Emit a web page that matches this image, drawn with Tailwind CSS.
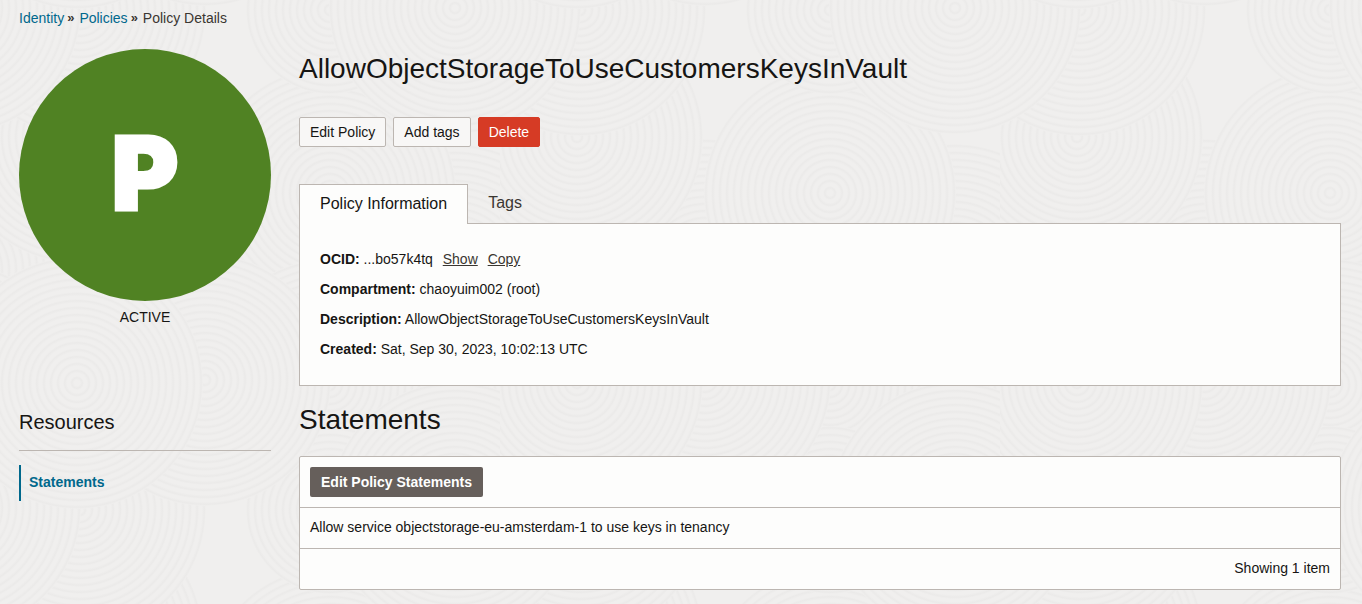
<!DOCTYPE html>
<html lang="en">
<head>
<meta charset="utf-8">
<meta name="viewport" content="width=device-width, initial-scale=1">
<title>Policy Details</title>
<script src="https://cdn.jsdelivr.net/npm/@tailwindcss/browser@4"></script>
</head>
<body class="relative isolate min-h-screen bg-[#f0efee] font-['Liberation_Sans',Arial,sans-serif] text-sm leading-5 text-[#161513]">
<!-- Backdrop of overlapping concentric ripples, tiled every 500px -->
<svg class="absolute inset-0 -z-10 h-full w-full" aria-hidden="true">
  <defs>
    <radialGradient id="ripple" gradientUnits="userSpaceOnUse" cx="0" cy="0" r="7" spreadMethod="repeat">
      <stop offset="0" stop-color="#f0efee"/><stop offset="0.4" stop-color="#f0efee"/><stop offset="0.75" stop-color="#ebeae9"/><stop offset="1" stop-color="#f0efee"/>
    </radialGradient>
    <circle id="big" r="126" fill="url(#ripple)"/>
    <circle id="mid" r="84" fill="url(#ripple)"/>
    <pattern id="waves" width="500" height="500" patternUnits="userSpaceOnUse">
      <use href="#big" x="455" y="270"/><use href="#big" x="-45" y="270"/>
      <use href="#big" x="205" y="265"/>
      <use href="#big" x="330" y="193"/>
      <use href="#big" x="455" y="390"/><use href="#big" x="-45" y="390"/><use href="#big" x="455" y="-110"/><use href="#big" x="-45" y="-110"/>
      <use href="#big" x="330" y="385"/><use href="#big" x="330" y="-115"/>
      <use href="#mid" x="330" y="10"/><use href="#mid" x="330" y="510"/>
      <use href="#big" x="77" y="137"/>
      <use href="#big" x="80" y="10"/><use href="#big" x="80" y="510"/>
      <use href="#big" x="455" y="8"/><use href="#big" x="-45" y="8"/><use href="#big" x="455" y="508"/><use href="#big" x="-45" y="508"/>
      <use href="#big" x="205" y="380"/><use href="#big" x="205" y="-120"/>
      <use href="#big" x="77" y="383"/><use href="#big" x="77" y="-117"/>
    </pattern>
  </defs>
  <rect width="100%" height="100%" fill="url(#waves)"/>
</svg>

<nav aria-label="Breadcrumb" class="px-[19px] pt-2 text-[#3a3631]">
  <ol class="flex gap-[5px]">
    <li class="flex gap-[3px]"><a href="#" class="text-[#00688c]">Identity</a><span class="text-[13px] leading-5 font-bold" aria-hidden="true">»</span></li>
    <li class="flex gap-[3px]"><a href="#" class="text-[#00688c]">Policies</a><span class="text-[13px] leading-5 font-bold" aria-hidden="true">»</span></li>
    <li aria-current="page">Policy Details</li>
  </ol>
</nav>

<div class="flex gap-7 pt-[21px] pr-[21px] pb-3 pl-[19px]">
  <aside class="w-[252px] shrink-0">
    <div class="flex aspect-square w-full items-center justify-center rounded-full bg-[#508223] pb-1 font-['Inter',sans-serif] text-[102px] leading-none font-black text-white [-webkit-text-stroke:3px_white]">P</div>
    <p class="mt-1.5 text-center">ACTIVE</p>
    <h2 class="mt-[81px] border-b border-[#bcb6b1] pb-3.5 text-xl leading-7">Resources</h2>
    <nav aria-label="Resources" class="mt-3.5">
      <a href="#statements" class="block border-l-2 border-[#00688c] pt-[7px] pb-[9px] pl-2 font-bold text-[#00688c]">Statements</a>
    </nav>
  </aside>

  <main class="min-w-0 flex-1">
    <h1 class="text-[28px] leading-10">AllowObjectStorageToUseCustomersKeysInVault</h1>
    <div class="mt-7 flex gap-[7px]">
      <button type="button" class="h-[30px] rounded-xs border border-[#bcb6b1] bg-[#f8f7f6] px-2.5">Edit Policy</button>
      <button type="button" class="h-[30px] rounded-xs border border-[#bcb6b1] bg-[#f8f7f6] px-2.5">Add tags</button>
      <button type="button" class="h-[30px] rounded-xs border border-[#d63b25] bg-[#d63b25] px-2.5 text-white">Delete</button>
    </div>

    <div role="tablist" class="relative mt-[37px] -mb-px flex items-start text-base">
      <button type="button" role="tab" id="tab-info" aria-selected="true" aria-controls="info" class="h-10 border border-b-0 border-[#bcb6b1] bg-[#fdfdfc] px-5 pb-0.5">Policy Information</button>
      <button type="button" role="tab" aria-selected="false" class="h-[38px] px-5 text-[#3a3631]">Tags</button>
    </div>
    <section id="info" role="tabpanel" aria-labelledby="tab-info" class="border border-[#bcb6b1] bg-[#fdfdfc] px-5 pt-5 pb-[21px] leading-[30px]">
      <p><strong>OCID:</strong> ...bo57k4tq <button type="button" class="ml-1.5 text-[#3a3631] underline">Show</button> <button type="button" class="ml-1.5 text-[#3a3631] underline">Copy</button></p>
      <p><strong>Compartment:</strong> chaoyuim002 (root)</p>
      <p><strong>Description:</strong> AllowObjectStorageToUseCustomersKeysInVault</p>
      <p><strong>Created:</strong> Sat, Sep 30, 2023, 10:02:13 UTC</p>
    </section>

    <h2 id="statements" class="mt-3.5 text-[28px] leading-10">Statements</h2>
    <section aria-labelledby="statements" class="mt-4 divide-y divide-[#bcb6b1] rounded-xs border border-[#bcb6b1] bg-[#fdfdfc]">
      <div class="p-2.5">
        <button type="button" class="block h-[30px] rounded-xs bg-[#665f5b] px-[11px] font-bold text-white">Edit Policy Statements</button>
      </div>
      <table class="w-full"><tbody><tr><td class="px-2.5 pt-[9px] pb-[11px]">Allow service objectstorage-eu-amsterdam-1 to use keys in tenancy</td></tr></tbody></table>
      <p class="px-2.5 pt-[9px] pb-[11px] text-right">Showing 1 item</p>
    </section>
  </main>
</div>
</body>
</html>
